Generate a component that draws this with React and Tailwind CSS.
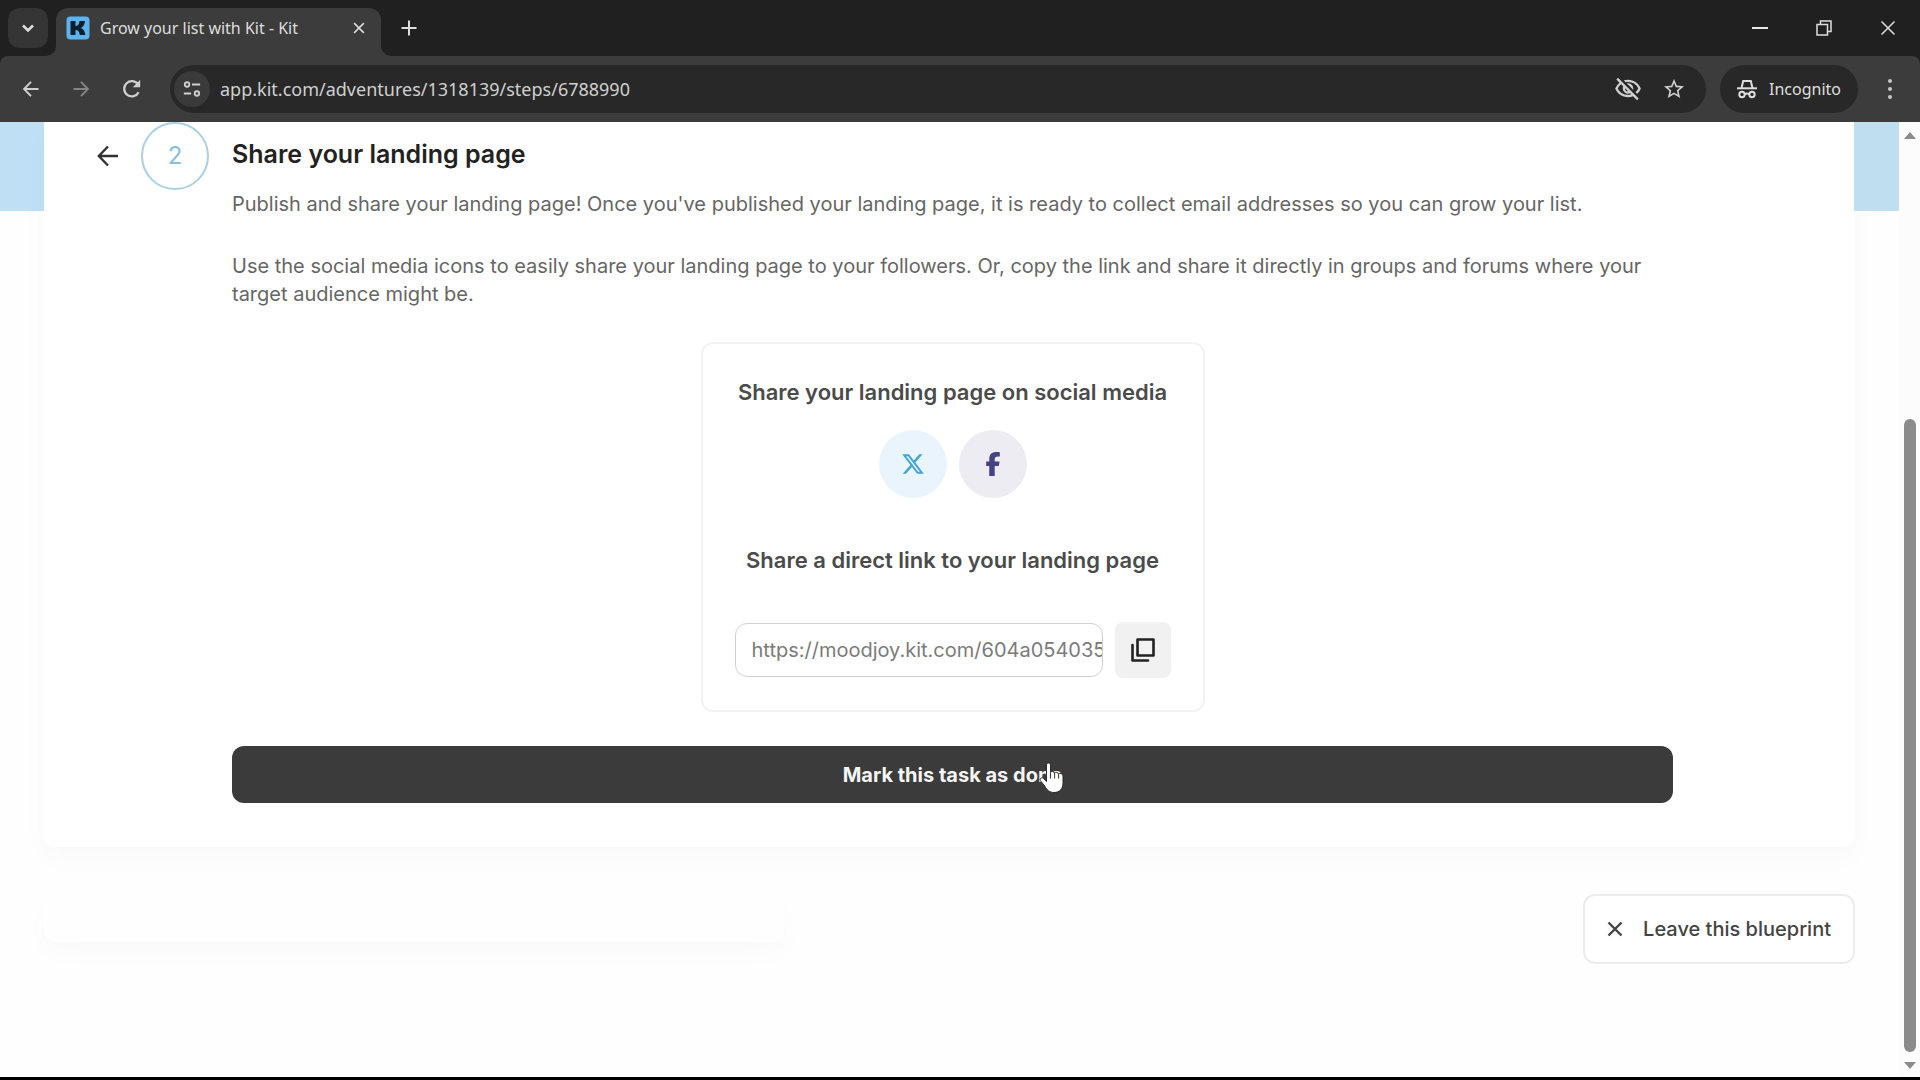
import { FaFacebookF, FaXTwitter } from "react-icons/fa6";
import { MdOutlineVisibilityOff, MdStarBorder } from "react-icons/md";

const stroke = { fill: "none", stroke: "currentColor", strokeWidth: 2 };

function Chevron() {
  return (
    <svg viewBox="0 0 24 24" className="size-6" {...stroke} strokeWidth="2.5">
      <path d="M7 9.5l5 5 5-5" />
    </svg>
  );
}

function KitLogo() {
  return (
    <svg viewBox="0 0 24 24" className="size-6 shrink-0">
      <rect x="0.5" y="0.5" width="23" height="23" rx="4" fill="#5cb4ee" />
      <path d="M4.500 5h5v5c2.500 0 3.600-1.800 4-5H19c-.3 3.400-1.600 5.700-4 6.900 2.600 1.100 4 3.500 4.400 7.100h-5.600c-.4-3.400-1.600-5-4.300-5v5h-5z" fill="#0d1f2e" />
    </svg>
  );
}

function Cross({ className, width = 2 }) {
  return (
    <svg viewBox="0 0 16 16" className={className} {...stroke} strokeWidth={width}>
      <path d="M1.500 1.500l13 13M14.500 1.500l-13 13" />
    </svg>
  );
}

function Plus() {
  return (
    <svg viewBox="0 0 16 16" className="size-4" {...stroke}>
      <path d="M8 0.500v15M0.500 8h15" />
    </svg>
  );
}

function Arrow({ className, width = 2 }) {
  return (
    <svg viewBox="0 0 24 24" className={className} {...stroke} strokeWidth={width}>
      <path d="M22 12H3M12 2.500L2.800 12l9.200 9.500" />
    </svg>
  );
}

function Reload() {
  return (
    <svg viewBox="0 0 20 20" className="size-5" {...stroke} strokeWidth="2.2">
      <path d="M16.600 13.200A7.600 7.600 0 1 1 16.200 5.600" />
      <path d="M18.200 0.800v7.400h-7.400z" fill="currentColor" stroke="none" />
    </svg>
  );
}

function SiteControls() {
  return (
    <svg viewBox="0 0 20 20" className="size-[18px]" {...stroke}>
      <circle cx="4.500" cy="5" r="2.500" />
      <path d="M10 5h9M1 15h8" />
      <circle cx="15.500" cy="15" r="2.500" />
    </svg>
  );
}

function Hat() {
  return (
    <svg viewBox="0 0 20 20" className="size-5" {...stroke} strokeWidth="2">
      <path d="M0 9.300h20" />
      <path d="M4.500 9L6.200 2h7.600l1.700 7" />
      <circle cx="5" cy="15.500" r="2.700" />
      <circle cx="15" cy="15.500" r="2.700" />
      <path d="M7.700 15.200q2.300-1.600 4.600 0" />
    </svg>
  );
}

function Copy() {
  return (
    <svg viewBox="0 0 24 24" className="size-6" {...stroke} strokeWidth="2.600" strokeLinejoin="round" strokeLinecap="round">
      <rect x="6.500" y="1.500" width="16" height="16" />
      <path d="M1.500 7v15.500H17" />
    </svg>
  );
}

function Hand() {
  return (
    <svg viewBox="0 0 26 32" className="h-8 w-[26px]">
      <path
        d="M7.500 3c0-2.700 4-2.700 4 0v7.500c.8-1.600 3.800-1.200 4 .6.900-1.300 3.700-.9 4 .9 1-1 4.500-.6 4.500 2V21c0 6-3.500 9.500-9 9.500-4.500 0-7-2.500-9-6L1.300 18.500c-1-2.200 1.700-3.600 3.200-2l3 3z"
        fill="#fff"
        stroke="#2b2b2b"
      />
      <path d="M11.500 10.500v6M15.600 11v5.500M19.600 12v4.500" stroke="#3b3b3b" strokeWidth="1" />
    </svg>
  );
}

function TabStrip() {
  return (
    <header className="flex h-14 items-end bg-[#202020] text-[#dedede]">
      <div className="flex w-14 justify-center self-stretch pt-2">
        <button aria-label="Search tabs" className="flex size-10 items-center justify-center rounded-xl bg-[#353535]">
          <Chevron />
        </button>
      </div>
      <div className="relative flex h-12 w-[325px] items-center rounded-t-xl bg-[#3c3c3c] pr-3 pl-2.5 pb-2">
        <svg viewBox="0 0 10 10" className="absolute bottom-0 -left-2.5 size-2.5">
          <path d="M10 0v10H0A10 10 0 0 0 10 0z" fill="#3c3c3c" />
        </svg>
        <svg viewBox="0 0 10 10" className="absolute -right-2.5 bottom-0 size-2.5">
          <path d="M0 0v10h10A10 10 0 0 1 0 0z" fill="#3c3c3c" />
        </svg>
        <KitLogo />
        <span className="ml-2.5 flex-1 font-['Noto_Sans',sans-serif] text-base whitespace-nowrap">Grow your list with Kit - Kit</span>
        <button aria-label="Close tab" className="p-1"><Cross className="size-3" /></button>
      </div>
      <button aria-label="New tab" className="mb-5 ml-5"><Plus /></button>
      <div className="ml-auto flex h-14 items-center gap-12 pr-6">
        <button aria-label="Minimize" className="flex size-4 items-center"><span className="h-0.5 w-full bg-[#e8e8e8]" /></button>
        <button aria-label="Restore">
          <svg viewBox="0 0 16 16" className="size-4" {...stroke} strokeWidth="1.500">
            <path d="M1 4.500h10.500V15H1zM4.500 4.500V1H15v10.500h-3.500" />
          </svg>
        </button>
        <button aria-label="Close window"><Cross className="size-4" width={1.5} /></button>
      </div>
    </header>
  );
}

function Toolbar() {
  return (
    <div className="bg-[#202020]">
      <nav className="flex h-[66px] items-center rounded-t-lg bg-[#3c3c3c] pr-[22px] pl-5 font-['Noto_Sans',sans-serif] text-[#d0d0d0]">
        <button aria-label="Back" className="mr-7 p-0.5"><Arrow className="size-[18px]" width={2.6} /></button>
        <button aria-label="Forward" className="mr-[30px] p-0.5 text-[#858585]"><Arrow className="size-[18px] rotate-180" width={2.6} /></button>
        <button aria-label="Reload"><Reload /></button>
        <div className="ml-7 flex h-12 flex-1 items-center rounded-full bg-[#282828] pr-5 pl-1">
          <button aria-label="Site information" className="flex size-9 items-center justify-center rounded-full bg-[#3a3a3a]"><SiteControls /></button>
          <input
            aria-label="Address"
            defaultValue="app.kit.com/adventures/1318139/steps/6788990"
            className="ml-2.5 min-w-0 flex-1 bg-transparent text-lg outline-none"
          />
          <button aria-label="Third-party cookies blocked" className="mr-5"><MdOutlineVisibilityOff className="size-7" /></button>
          <button aria-label="Bookmark"><MdStarBorder className="size-6" /></button>
        </div>
        <button className="ml-3.5 flex h-12 items-center gap-3 rounded-full bg-[#282828] px-[17px] text-base text-[#dedede]">
          <Hat />
          Incognito
        </button>
        <button aria-label="Menu" className="ml-6 flex w-4 flex-col items-center gap-1">
          <span className="size-1 rounded-full bg-[#c8c8c8]" />
          <span className="size-1 rounded-full bg-[#c8c8c8]" />
          <span className="size-1 rounded-full bg-[#c8c8c8]" />
        </button>
      </nav>
    </div>
  );
}

function ShareCard() {
  return (
    <section className="mx-auto mt-[34px] flex w-[504px] flex-col items-center rounded-xl border-2 border-[#f3f3f3] px-8 pt-[30px] pb-8">
      <h2 className="text-[22px] leading-9 font-semibold whitespace-nowrap text-[#4b4b4b]">Share your landing page on social media</h2>
      <div className="mt-5 flex gap-3">
        <button aria-label="Share on X" className="flex size-[68px] items-center justify-center rounded-full bg-[#eaf4fd] text-[#42a5da]">
          <FaXTwitter className="size-6" />
        </button>
        <button aria-label="Share on Facebook" className="flex size-[68px] items-center justify-center rounded-full bg-[#edecf3] text-[#444384]">
          <FaFacebookF className="size-6" />
        </button>
      </div>
      <h2 className="mt-11 text-[22px] leading-9 font-semibold whitespace-nowrap text-[#4b4b4b]">Share a direct link to your landing page</h2>
      <div className="mt-11 flex w-full items-center gap-3">
        <input
          aria-label="Landing page link"
          readOnly
          value="https://moodjoy.kit.com/604a054035"
          className="h-[54px] min-w-0 flex-1 rounded-xl border border-[#d0d0d0] pl-4 text-xl text-[#7b7b7b] outline-none"
        />
        <button aria-label="Copy link" className="flex size-14 items-center justify-center rounded-lg bg-[#f1f1f1] text-[#222]"><Copy /></button>
      </div>
    </section>
  );
}

function StepPanel() {
  return (
    <article className="flex-1 rounded-b-xl bg-white pr-[181px] pb-11 pl-12 shadow-[0_12px_28px_rgba(0,0,0,0.025)]">
      <div className="flex">
        <div className="flex h-[68px] w-[140px] shrink-0 items-center">
          <button aria-label="Previous step" className="ml-1 text-[#333]"><Arrow className="size-6" width={2.4} /></button>
          <span className="ml-[21px] flex size-[68px] items-center justify-center rounded-full border-2 border-[#a9d0e5] text-2xl text-[#86bfdf]">2</span>
        </div>
        <div className="min-w-0 flex-1">
          <h1 className="flex h-[68px] items-center pb-0.5 text-[25px] font-semibold text-[#222]">Share your landing page</h1>
          <p className="text-xl leading-7 text-[#666]">
            Publish and share your landing page! Once you've published your landing page, it is ready to collect email addresses so you can grow your list.
          </p>
          <p className="mt-[34px] text-xl leading-7 text-[#666]">
            Use the social media icons to easily share your landing page to your followers. Or, copy the link and share it directly in groups and forums where your target audience might be.
          </p>
        </div>
      </div>
      <div className="ml-[140px]">
        <ShareCard />
        <div className="relative mt-[34px]">
          <button className="h-[57px] w-full rounded-xl bg-[#3b3b3b] text-xl font-bold text-[#f5f5f5]">Mark this task as done</button>
          <span className="pointer-events-none absolute top-4 left-[56%]"><Hand /></span>
        </div>
      </div>
    </article>
  );
}

function Scrollbar() {
  return (
    <div aria-hidden="true" className="flex w-[21px] flex-col items-center bg-[#fcfcfc] pt-2.5 pb-2">
      <span className="border-x-[6px] border-b-[7px] border-x-transparent border-b-[#8b8b8b]" />
      <span className="mt-[280px] w-3 flex-1 rounded-full bg-[#8b8b8b]" />
      <span className="mt-2.5 border-x-[6px] border-t-[7px] border-x-transparent border-t-[#8b8b8b]" />
    </div>
  );
}

export default function App() {
  return (
    <div className="flex min-h-screen flex-col border-b-[3px] border-black bg-[#fefefe] font-['Inter',sans-serif]">
      <TabStrip />
      <Toolbar />
      <div className="flex flex-1">
        <main className="min-w-0 flex-1">
          <div className="flex">
            <div className="h-[89px] w-11 bg-[#bfdff5]" />
            <StepPanel />
            <div className="h-[89px] w-[45px] bg-[#bfdff0]" />
          </div>
          <div className="mt-[47px] mr-11 ml-11 flex items-start justify-between">
            <div className="h-12 w-[740px] rounded-xl shadow-[0_12px_28px_rgba(0,0,0,0.02)]" />
            <button className="flex h-[70px] items-center gap-5 rounded-xl border-2 border-[#ececec] bg-white px-[22px] text-xl font-medium text-[#444]">
              <Cross className="size-4" width={2.4} />
              Leave this blueprint
            </button>
          </div>
        </main>
        <Scrollbar />
      </div>
    </div>
  );
}
